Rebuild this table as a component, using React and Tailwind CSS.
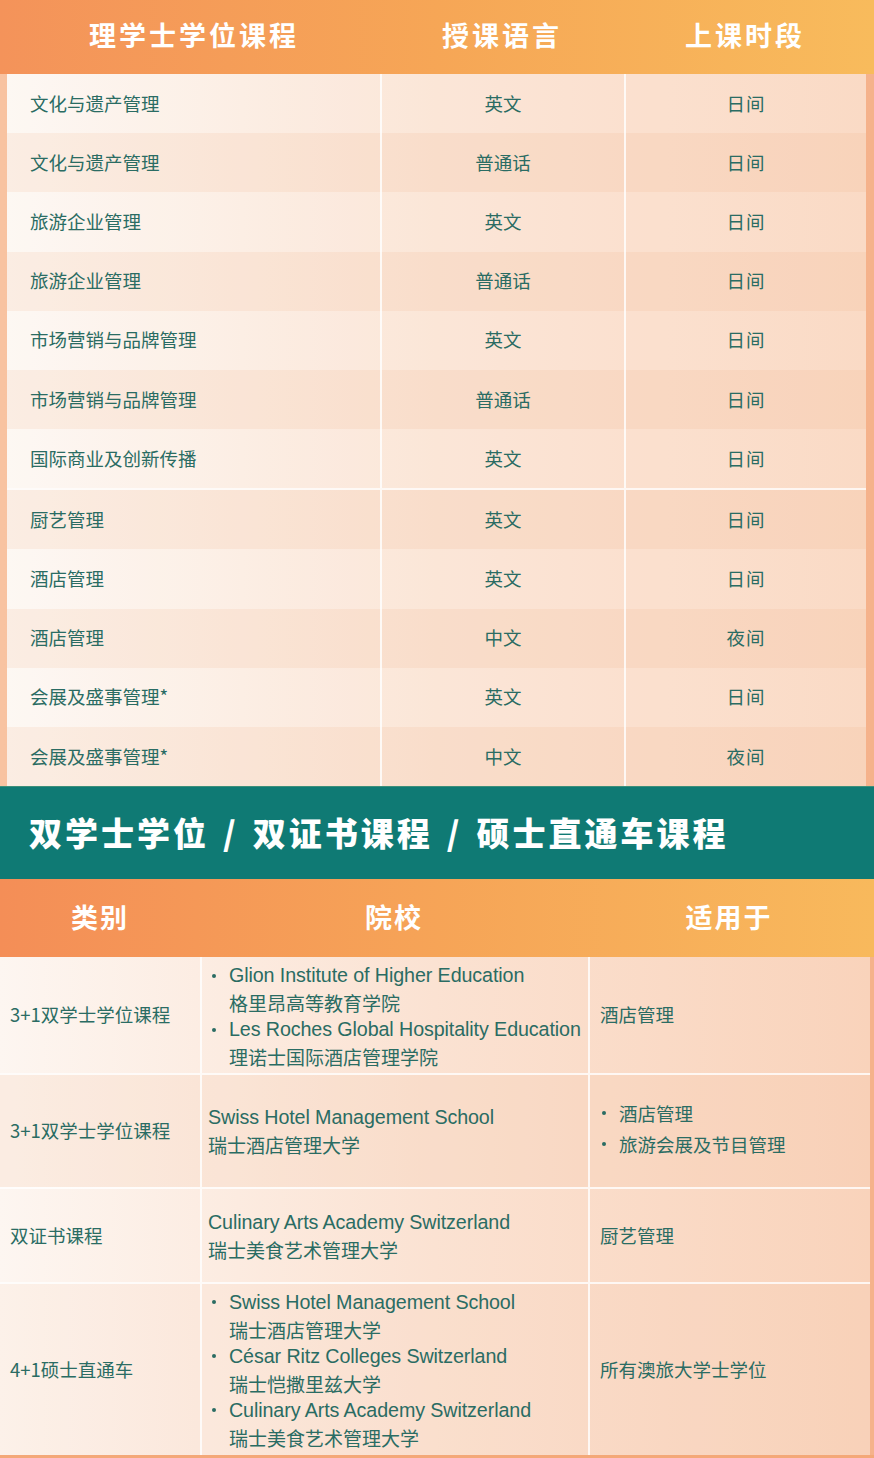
import React from "react";

const font = { fontFamily: '"Noto Sans CJK SC", "Noto Sans", sans-serif' };
const latin = { fontFamily: '"Liberation Sans", "Noto Sans CJK SC", sans-serif' };

const rows1 = [
  ["文化与遗产管理", "英文", "日间"],
  ["文化与遗产管理", "普通话", "日间"],
  ["旅游企业管理", "英文", "日间"],
  ["旅游企业管理", "普通话", "日间"],
  ["市场营销与品牌管理", "英文", "日间"],
  ["市场营销与品牌管理", "普通话", "日间"],
  ["国际商业及创新传播", "英文", "日间"],
  ["厨艺管理", "英文", "日间"],
  ["酒店管理", "英文", "日间"],
  ["酒店管理", "中文", "夜间"],
  ["会展及盛事管理*", "英文", "日间"],
  ["会展及盛事管理*", "中文", "夜间"],
];

function Bullet({ children }) {
  return (
    <div className="flex">
      <div className="w-[19px] shrink-0 h-[27px] flex items-center">
        <span className="ml-[2px] w-[4px] h-[4px] rounded-full bg-[#2a6c63]" />
      </div>
      <div>{children}</div>
    </div>
  );
}

function School({ en, zh }) {
  return (
    <div className="leading-[27px]">
      <div style={latin} className="text-[19.7px] tracking-[-0.1px]">{en}</div>
      <div className="text-[19px]">{zh}</div>
    </div>
  );
}

export default function App() {
  return (
    <div style={font} className="w-[874px] h-[1458px] bg-[#f8c5a4] text-[#2a6c63] overflow-hidden">
      {/* Table 1 header */}
      <div className="h-[74px] bg-gradient-to-r from-[#f4935a] via-[#f6a656] to-[#f8bb5c] flex items-center text-white font-bold text-[27px] tracking-[3px] pr-[8px] pb-[4px]">
        <div className="w-[380px] text-center pl-[8px]">理学士学位课程</div>
        <div className="w-[244px] text-center">授课语言</div>
        <div className="w-[242px] text-center">上课时段</div>
      </div>
      {/* Table 1 body */}
      <div className="h-[712px] flex bg-gradient-to-r from-[#f8c3a1] to-[#f5b28b]">
        <div className="w-[7px]" />
        <div className="w-[859px] flex flex-col bg-gradient-to-r from-[#fdf7f2] via-[#fbe3d3] to-[#f9d6bf]">
          {rows1.map((r, i) => (
            <div
              key={i}
              className={
                "flex-1 flex items-center text-[18.5px] " +
                (i % 2 === 1 ? "bg-[#f7c9a8]/20 " : "bg-white/10 ") +
                (i === 7 ? "border-t-2 border-white/80" : "")
              }
            >
              <div className="w-[373px] pl-[23px] self-stretch flex items-center">{r[0]}</div>
              <div className="w-[244px] self-stretch flex items-center justify-center border-l-2 border-white/80">{r[1]}</div>
              <div className="w-[242px] self-stretch flex items-center justify-center border-l-2 border-white/80 tracking-[1px]">{r[2]}</div>
            </div>
          ))}
        </div>
        <div className="w-[8px]" />
      </div>
      {/* Teal banner */}
      <div className="h-[93px] bg-[#0f7a74] border-t border-[#3c8f7a] flex items-center pl-[29px] text-white text-[33px] font-black tracking-[3px]">
        <span>双学士学位</span>
        <span className="mx-[14px]">/</span>
        <span>双证书课程</span>
        <span className="mx-[14px]">/</span>
        <span>硕士直通车课程</span>
      </div>
      {/* Table 2 header */}
      <div className="h-[78px] bg-gradient-to-r from-[#f48e57] via-[#f6a457] to-[#f8b95c] flex items-center text-white font-bold text-[27px] tracking-[2px] pb-[2px]">
        <div className="w-[200px] text-center">类别</div>
        <div className="w-[388px] text-center">院校</div>
        <div className="w-[282px] text-center">适用于</div>
      </div>
      {/* Table 2 body */}
      <div className="flex">
        <div className="w-[870px] flex flex-col bg-gradient-to-r from-[#fdf6f1] via-[#fbe2d2] to-[#f9d3bb] text-[18.5px]">
          <div className="h-[116px] flex">
            <div className="w-[200px] flex items-center pl-[10px]">3+1双学士学位课程</div>
            <div className="w-[388px] border-l-2 border-white/80 pl-[8px] pt-[2px] flex flex-col justify-center">
              <Bullet><School en="Glion Institute of Higher Education" zh="格里昂高等教育学院" /></Bullet>
              <Bullet><School en="Les Roches Global Hospitality Education" zh="理诺士国际酒店管理学院" /></Bullet>
            </div>
            <div className="flex-1 border-l-2 border-white/80 flex items-center pl-[10px]">酒店管理</div>
          </div>
          <div className="h-[114px] flex border-t-2 border-white/80 bg-[#f7c9a8]/20">
            <div className="w-[200px] flex items-center pl-[10px]">3+1双学士学位课程</div>
            <div className="w-[388px] border-l-2 border-white/80 pl-[6px] flex items-center">
              <School en="Swiss Hotel Management School" zh="瑞士酒店管理大学" />
            </div>
            <div className="flex-1 border-l-2 border-white/80 flex flex-col justify-center pl-[10px] pb-[4px]">
              <Bullet><span className="leading-[27px]">酒店管理</span></Bullet>
              <div className="h-[3px]" />
              <Bullet><span className="leading-[27px]">旅游会展及节目管理</span></Bullet>
            </div>
          </div>
          <div className="h-[95px] flex border-t-2 border-white/80">
            <div className="w-[200px] flex items-center pl-[10px]">双证书课程</div>
            <div className="w-[388px] border-l-2 border-white/80 pl-[6px] flex items-center">
              <School en="Culinary Arts Academy Switzerland" zh="瑞士美食艺术管理大学" />
            </div>
            <div className="flex-1 border-l-2 border-white/80 flex items-center pl-[10px]">厨艺管理</div>
          </div>
          <div className="h-[173px] flex border-t-2 border-white/80 bg-[#f7c9a8]/10">
            <div className="w-[200px] flex items-center pl-[10px]">4+1硕士直通车</div>
            <div className="w-[388px] border-l-2 border-white/80 pl-[8px] flex flex-col justify-center">
              <Bullet><School en="Swiss Hotel Management School" zh="瑞士酒店管理大学" /></Bullet>
              <Bullet><School en="César Ritz Colleges Switzerland" zh="瑞士恺撒里兹大学" /></Bullet>
              <Bullet><School en="Culinary Arts Academy Switzerland" zh="瑞士美食艺术管理大学" /></Bullet>
            </div>
            <div className="flex-1 border-l-2 border-white/80 flex items-center pl-[10px]">所有澳旅大学士学位</div>
          </div>
        </div>
        <div className="w-[4px] bg-[#f5b28b]" />
      </div>
      <div className="h-[10px] bg-[#f4a878]" />
    </div>
  );
}
